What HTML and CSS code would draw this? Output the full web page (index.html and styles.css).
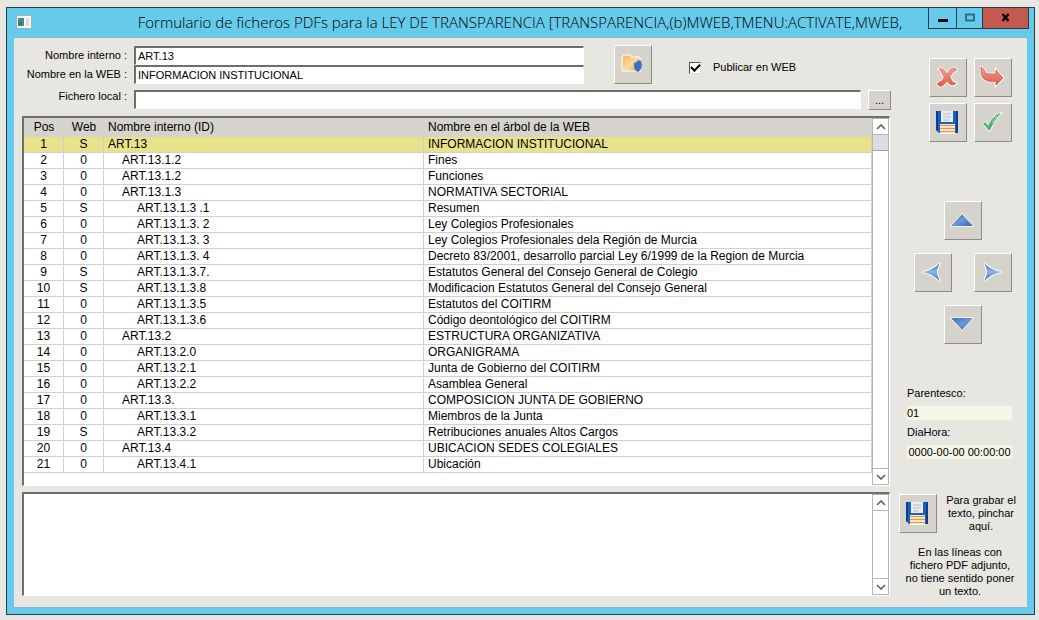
FILE: index.html
```html
<!DOCTYPE html>
<html lang="es">
<head>
<meta charset="utf-8">
<title>Formulario de ficheros PDFs</title>
<link rel="stylesheet" href="styles.css">
</head>
<body>
<svg class="defs" aria-hidden="true">
  <defs>
    <linearGradient id="blue" x1="0" y1="0" x2="1" y2="1"><stop offset="0" stop-color="#3d70b8"/><stop offset=".5" stop-color="#6d98d4"/><stop offset="1" stop-color="#3567b0"/></linearGradient>
    <linearGradient id="blueSide" x1="0" y1="0" x2="0" y2="1"><stop offset="0" stop-color="#3567b0"/><stop offset=".5" stop-color="#8fb6e4"/><stop offset="1" stop-color="#2f62ab"/></linearGradient>
    <linearGradient id="red" x1="0" y1="0" x2="0" y2="1"><stop offset="0" stop-color="#f0a193"/><stop offset="1" stop-color="#de5a4a"/></linearGradient>
    <linearGradient id="folder" x1="0" y1="0" x2="1" y2="1"><stop offset="0" stop-color="#f4b455"/><stop offset=".5" stop-color="#fbd9a0"/><stop offset="1" stop-color="#f0a848"/></linearGradient>
    <symbol id="floppy" viewBox="0 0 24 24">
      <path d="M1 1h22v22H4l-3-3z" fill="#1d5fc0"/><path d="M1 1h2v20l-2-1zM21 1h2v22h-2z" fill="#0b3f92"/>
      <path d="M6 1h12v11H6z" fill="#eceef2"/><path d="M8 4h8M8 7h8M8 10h6" stroke="#b4b8c0" stroke-width="1"/>
      <path d="M5 14h15v10H5z" fill="#fff"/><path d="M5 15.5h15M5 18.5h15M5 21.5h15" stroke="#e9963a" stroke-width="1.6"/>
    </symbol>
    <symbol id="up" viewBox="0 0 10 6"><path d="M1 5l4-4 4 4" fill="none" stroke="#606060" stroke-width="1.6"/></symbol>
    <symbol id="down" viewBox="0 0 10 6"><path d="M1 1l4 4 4-4" fill="none" stroke="#606060" stroke-width="1.6"/></symbol>
  </defs>
</svg>
<div class="window">
  <header class="titlebar">
    <svg class="app-icon" viewBox="0 0 16 14"><path d="M.5.5h15v13H.5z" fill="#f5f7f5" stroke="#9cb1b8"/><path d="M2 3h6v8H2z" fill="#4b83a5"/><path d="M2 6h4v5H2z" fill="#3d8260"/><path d="M10 3h3v8h-3z" fill="#d5dedb"/></svg>
    <h1 class="title">Formulario de ficheros PDFs para la LEY DE TRANSPARENCIA [TRANSPARENCIA,(b)MWEB,TMENU:ACTIVATE,MWEB,</h1>
    <div class="controls">
      <button class="control" aria-label="Minimizar"><svg width="12" height="12"><path d="M1 7h10v3H1z"/></svg></button>
      <button class="control control-max" aria-label="Maximizar"><svg width="12" height="12"><path d="M2 2.500h8v6H2z" fill="none" stroke="#2f6f88" stroke-width="2"/></svg></button>
      <button class="control control-close" aria-label="Cerrar"><svg width="12" height="12"><path d="M2.500 2l6 7M8.500 2l-6 7" stroke="#000" stroke-width="2.400"/></svg></button>
    </div>
  </header>
  <div class="body">
    <main class="main">
      <div class="top">
        <div class="fields">
          <label for="interno">Nombre interno :</label><input id="interno" class="text" value="ART.13">
          <label for="web">Nombre en la WEB :</label><input id="web" class="text" value="INFORMACION INSTITUCIONAL">
        </div>
        <button class="tool" aria-label="Abrir carpeta"><svg width="22" height="22" viewBox="0 0 22 22"><path d="M1 4l2-2h6l2 2h8v5h1v9H1z" fill="url(#folder)" stroke="#fff"/><path d="M13 10l3-1 1-2 3 1 1 4-1 4-3 3-3-2-1-3z" fill="#3d6fb8" stroke="#7ea3d8" stroke-width=".6"/></svg></button>
        <label class="check"><input type="checkbox" checked>Publicar en WEB</label>
      </div>
      <div class="file-row">
        <label for="fichero">Fichero local :</label><input id="fichero" class="text"><button class="browse">...</button>
      </div>
      <div class="sunken list">
        <div class="list-view">
        <table>
          <colgroup><col class="col-short"><col class="col-short"><col class="col-id"><col></colgroup>
          <thead><tr><th>Pos</th><th>Web</th><th>Nombre interno (ID)</th><th>Nombre en el árbol de la WEB</th></tr></thead>
          <tbody>
            <tr class="selected"><td>1</td><td>S</td><td>ART.13</td><td>INFORMACION INSTITUCIONAL</td></tr>
            <tr><td>2</td><td>0</td><td class="l1">ART.13.1.2</td><td>Fines</td></tr>
            <tr><td>3</td><td>0</td><td class="l1">ART.13.1.2</td><td>Funciones</td></tr>
            <tr><td>4</td><td>0</td><td class="l1">ART.13.1.3</td><td>NORMATIVA SECTORIAL</td></tr>
            <tr><td>5</td><td>S</td><td class="l2">ART.13.1.3 .1</td><td>Resumen</td></tr>
            <tr><td>6</td><td>0</td><td class="l2">ART.13.1.3. 2</td><td>Ley Colegios Profesionales</td></tr>
            <tr><td>7</td><td>0</td><td class="l2">ART.13.1.3. 3</td><td>Ley Colegios Profesionales dela Región de Murcia</td></tr>
            <tr><td>8</td><td>0</td><td class="l2">ART.13.1.3. 4</td><td>Decreto 83/2001, desarrollo parcial Ley 6/1999 de la Region de Murcia</td></tr>
            <tr><td>9</td><td>S</td><td class="l2">ART.13.1.3.7.</td><td>Estatutos General del Consejo General de Colegio</td></tr>
            <tr><td>10</td><td>S</td><td class="l2">ART.13.1.3.8</td><td>Modificacion Estatutos General del Consejo General</td></tr>
            <tr><td>11</td><td>0</td><td class="l2">ART.13.1.3.5</td><td>Estatutos del COITIRM</td></tr>
            <tr><td>12</td><td>0</td><td class="l2">ART.13.1.3.6</td><td>Código deontológico del COITIRM</td></tr>
            <tr><td>13</td><td>0</td><td class="l1">ART.13.2</td><td>ESTRUCTURA ORGANIZATIVA</td></tr>
            <tr><td>14</td><td>0</td><td class="l2">ART.13.2.0</td><td>ORGANIGRAMA</td></tr>
            <tr><td>15</td><td>0</td><td class="l2">ART.13.2.1</td><td>Junta de Gobierno del COITIRM</td></tr>
            <tr><td>16</td><td>0</td><td class="l2">ART.13.2.2</td><td>Asamblea General</td></tr>
            <tr><td>17</td><td>0</td><td class="l1">ART.13.3.</td><td>COMPOSICION JUNTA DE GOBIERNO</td></tr>
            <tr><td>18</td><td>0</td><td class="l2">ART.13.3.1</td><td>Miembros de la Junta</td></tr>
            <tr><td>19</td><td>S</td><td class="l2">ART.13.3.2</td><td>Retribuciones anuales Altos Cargos</td></tr>
            <tr><td>20</td><td>0</td><td class="l1">ART.13.4</td><td>UBICACION SEDES COLEGIALES</td></tr>
            <tr><td>21</td><td>0</td><td class="l2">ART.13.4.1</td><td>Ubicación</td></tr>
          </tbody>
        </table>
        </div>
        <div class="scroll"><button class="step" aria-label="Subir"><svg class="chev"><use href="#up"/></svg></button><div class="thumb"></div><div class="track"></div><button class="step" aria-label="Bajar"><svg class="chev"><use href="#down"/></svg></button></div>
      </div>
      <div class="sunken memo">
        <textarea aria-label="Texto"></textarea>
        <div class="scroll"><button class="step" aria-label="Subir texto"><svg class="chev"><use href="#up"/></svg></button><div class="track"></div><button class="step" aria-label="Bajar texto"><svg class="chev"><use href="#down"/></svg></button></div>
      </div>
    </main>
    <aside class="side">
      <div class="actions">
        <button class="tool" aria-label="Cancelar"><svg width="22" height="22" viewBox="0 0 22 22"><path d="M3 3C6 2 8 3 11 8c2-3 4-6 7-6 2 0 3 1 2 3-1-1-4 2-6 6 2 4 3 6 6 6-1 3-6 3-9-2-3 4-5 6-8 5-2-1-2-3 0-4 2 0 4-2 5-5C6 7 5 5 3 3z" fill="url(#red)" stroke="#fff" stroke-width="2.400" paint-order="stroke"/><path d="M3 3C6 2 8 3 11 8c2-3 4-6 7-6 2 0 3 1 2 3-1-1-4 2-6 6 2 4 3 6 6 6-1 3-6 3-9-2-3 4-5 6-8 5-2-1-2-3 0-4 2 0 4-2 5-5C6 7 5 5 3 3z" fill="none" stroke="#d65546" stroke-width=".6"/></svg></button>
        <button class="tool" aria-label="Salir"><svg width="24" height="22" viewBox="0 0 24 22"><path d="M1 1c2 1 4 3 4 6 2 1 6 1 11 1V4l7 8-7 7v-4c-6 1-10 0-13-3C1 9 1 5 1 1z" fill="url(#red)" stroke="#fff" stroke-width="2.400" paint-order="stroke"/><path d="M1 1c2 1 4 3 4 6 2 1 6 1 11 1V4l7 8-7 7v-4c-6 1-10 0-13-3C1 9 1 5 1 1z" fill="none" stroke="#d65546" stroke-width=".8"/></svg></button>
        <button class="tool" aria-label="Guardar"><svg width="24" height="24"><use href="#floppy"/></svg></button>
        <button class="tool" aria-label="Aceptar"><svg width="22" height="22" viewBox="0 0 22 22"><path d="M2 13c1-2 3-2 4 0l1 2C10 9 14 3 20 2c-5 5-8 11-11 17H7c-1-3-3-4-5-6z" fill="#4fae72" stroke="#fff" stroke-width="1.600" paint-order="stroke"/><path d="M11 12l5-7" stroke="#b8dfc5"/></svg></button>
      </div>
      <div class="pad">
        <button class="tool arrow-up" aria-label="Arriba"><svg width="24" height="24" viewBox="0 0 24 24"><path d="M1 18L12 6l11 12z" fill="url(#blue)" stroke="#fff" stroke-width="1.400" paint-order="stroke"/></svg></button>
        <button class="tool arrow-left" aria-label="Izquierda"><svg width="24" height="24" viewBox="0 0 24 24"><path d="M2 12C9 11 15 8 20 3c-4 7-4 11 0 18-5-5-11-8-18-9z" fill="url(#blueSide)" stroke="#fff" stroke-width="2" paint-order="stroke"/></svg></button>
        <button class="tool arrow-right" aria-label="Derecha"><svg width="24" height="24" viewBox="0 0 24 24"><path d="M22 12C15 11 9 8 4 3c4 7 4 11 0 18 5-5 11-8 18-9z" fill="url(#blueSide)" stroke="#fff" stroke-width="2" paint-order="stroke"/></svg></button>
        <button class="tool arrow-down" aria-label="Abajo"><svg width="24" height="24" viewBox="0 0 24 24"><path d="M1 6h22L12 18z" fill="url(#blue)" stroke="#fff" stroke-width="1.400" paint-order="stroke"/></svg></button>
      </div>
      <div class="info">
        <label for="parentesco">Parentesco:</label><input id="parentesco" value="01" readonly>
        <label for="diahora">DiaHora:</label><input id="diahora" class="centered" value="0000-00-00 00:00:00" readonly>
      </div>
      <div class="save">
        <button class="tool" aria-label="Grabar texto"><svg width="24" height="24"><use href="#floppy"/></svg></button>
        <p>Para grabar el<br>texto, pinchar<br>aquí.</p>
      </div>
      <p class="note">En las líneas con<br>fichero PDF adjunto,<br>no tiene sentido poner<br>un texto.</p>
    </aside>
  </div>
</div>
</body>
</html>
```
FILE: styles.css
```css
* { box-sizing: border-box; }
body {
  margin: 0;
  min-height: 100vh;
  padding: 7px 4px 5px 6px;
  display: flex;
  background: #e7e6e1;
  color: #000;
  font: 11px/13px "Liberation Sans", Arial, sans-serif;
}
p, h1 { margin: 0; }
button, input, textarea { font: inherit; color: inherit; border-radius: 0; }
button { padding: 0; }
.defs { position: absolute; width: 0; height: 0; }
.window {
  flex: 1;
  display: flex;
  flex-direction: column;
  border: 1px solid #243c48;
  background: #66caea;
  padding: 0 7px 6px;
}
.titlebar { display: flex; align-items: flex-start; height: 29px; margin-right: -2px; }
.app-icon { width: 16px; height: 14px; margin: 7px 0 0 2px; }
.title {
  flex: 1;
  padding: 4px 0 0 80px;
  text-align: center;
  font: 300 15px/20px "Open Sans", "Noto Sans", sans-serif;
  white-space: nowrap;
}
.controls { display: flex; border: 1px solid #243c48; border-top: 0; }
.control {
  width: 28px;
  height: 20px;
  border: 0;
  border-right: 1px solid #243c48;
  background: #66caea;
  display: grid;
  place-items: center;
}
.control-max { width: 26px; }
.control-close { width: 45px; border: 0; background: #c25a50; }
.body {
  flex: 1;
  display: grid;
  grid-template-columns: 1fr 136px;
  background: #e7e6e1;
  border-top: 1px solid #8fb2be;
  border-bottom: 1px solid #8fb2be;
}
.main { display: flex; flex-direction: column; padding: 7px 0 11px 8px; min-width: 0; }
.top { display: flex; align-items: center; }
.fields { display: grid; grid-template-columns: 105px 450px; column-gap: 7px; align-items: center; text-align: right; }
.text {
  width: 100%;
  height: 19px;
  padding: 0 2px;
  background: #fff;
  border: 1px solid #fff;
  border-top: 2px solid #6e6e6e;
  border-left: 2px solid #6e6e6e;
  outline: 0;
}
.tool {
  width: 38px;
  height: 39px;
  flex: none;
  padding: 0 2px 2px 0;
  background: #d6d3cd;
  border: 1px solid #fff;
  border-right-color: #8d8b86;
  border-bottom-color: #8d8b86;
  display: grid;
  place-items: center;
}
.top .tool { margin-left: 30px; }
.check { display: flex; align-items: center; gap: 12px; margin: 6px 0 0 37px; }
.check input {
  appearance: none;
  width: 12px;
  height: 12px;
  margin: 0;
  background: #fff;
  border: 1px solid #555;
  border-right-color: #ddd;
  border-bottom-color: #ddd;
  display: grid;
  place-items: center;
}
.check input:checked::before {
  content: "";
  width: 7px;
  height: 4px;
  border: solid #000;
  border-width: 0 0 2px 2px;
  transform: rotate(-45deg) translate(1px, -1px);
}
.file-row { display: flex; gap: 7px; margin-top: 6px; }
.file-row label { width: 105px; flex: none; text-align: right; }
.browse {
  width: 23px;
  height: 20px;
  flex: none;
  background: #d6d3cd;
  border: 1px solid #fff;
  border-right-color: #8d8b86;
  border-bottom-color: #8d8b86;
}
.sunken {
  display: flex;
  margin-right: 1px;
  background: #fff;
  border: 1px solid #fff;
  border-top: 2px solid #6e6e6e;
  border-left: 2px solid #6e6e6e;
}
.list { margin-top: 6px; }
.list-view { flex: 1; padding-bottom: 12px; }
table { width: 100%; table-layout: fixed; border-collapse: separate; border-spacing: 0; font-size: 12px; line-height: 15px; }
.col-short { width: 40px; }
.col-id { width: 320px; }
th { height: 19px; padding: 0 4px; background: #d6d3cd; font-weight: 400; text-align: left; }
td {
  height: 16px;
  padding: 0 4px;
  border-bottom: 1px solid #d0d0d0;
  border-right: 1px solid #d0d0d0;
  white-space: nowrap;
}
th:nth-child(-n+2), td:nth-child(-n+2) { text-align: center; }
.selected td { background: #e8e28b; }
.l1 { padding-left: 18px; }
.l2 { padding-left: 33px; }
.scroll { width: 17px; flex: none; display: flex; flex-direction: column; border: 1px solid #b5b5b5; background: #fff; }
.step { height: 16px; border: 0; background: #fff; display: grid; place-items: center; }
.step:first-child { border-bottom: 1px solid #b5b5b5; }
.step:last-child { border-top: 1px solid #b5b5b5; }
.chev { width: 10px; height: 6px; }
.thumb { height: 16px; background: #dddde0; border-bottom: 1px solid #a0a0a0; }
.track { flex: 1; }
.memo { flex: 1; margin-top: 6px; min-height: 80px; }
textarea { flex: 1; border: 0; resize: none; outline: 0; background: #fff; }
.side { padding-top: 20px; }
.actions { display: grid; grid-template-columns: 38px 38px; gap: 6px 7px; margin-left: 38px; }
.pad {
  display: grid;
  grid-template-columns: 38px 38px;
  grid-template-areas: "up up" "left right" "down down";
  gap: 13px 22px;
  justify-items: center;
  width: 98px;
  margin: 59px 0 0 23px;
}
.arrow-up { grid-area: up; }
.arrow-left { grid-area: left; }
.arrow-right { grid-area: right; }
.arrow-down { grid-area: down; }
.info { display: flex; flex-direction: column; gap: 6px; width: 105px; margin: 43px 0 0 16px; }
.info input { width: 100%; height: 14px; padding: 0; border: 0; background: #f5f6e6; outline: 0; }
.info .centered { text-align: center; }
.save { display: flex; gap: 6px; margin: 35px 0 0 8px; text-align: center; }
.save p { width: 76px; }
.note { margin-top: 13px; padding-left: 2px; text-align: center; }
```
